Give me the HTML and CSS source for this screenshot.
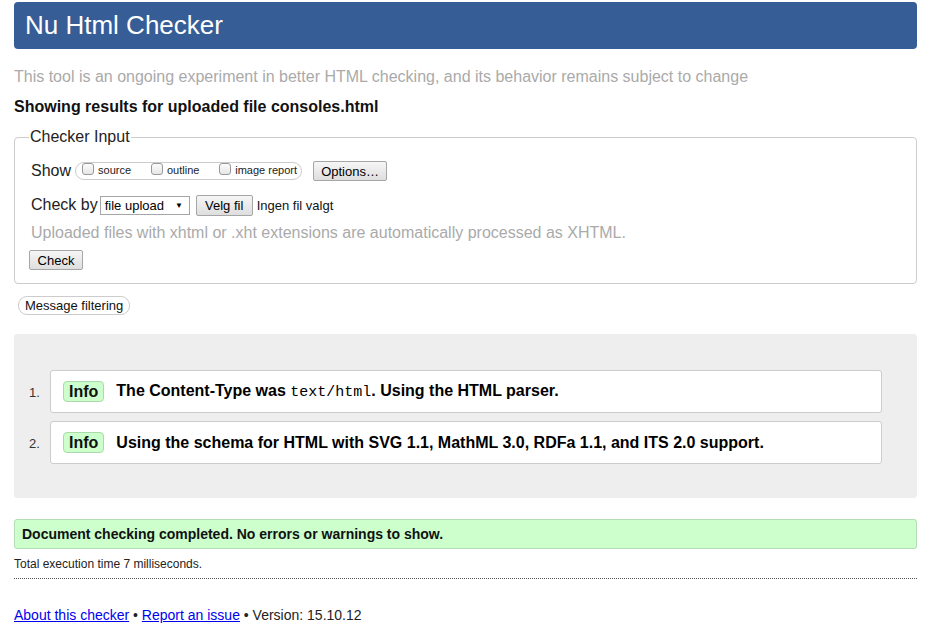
FILE: index.html
```html
<!DOCTYPE html>
<html>
<head>
<meta charset="utf-8">
<title>Nu Html Checker</title>
<link rel="stylesheet" href="styles.css">
</head>
<body>
<div class="page">
  <h1 class="banner">Nu Html Checker</h1>
  <p class="tagline">This tool is an ongoing experiment in better HTML checking, and its behavior remains subject to change</p>
  <p class="showing">Showing results for uploaded file consoles.html</p>

  <fieldset class="input">
    <legend>Checker Input</legend>
    <div class="row">
      <span class="lbl">Show</span>
      <span class="pill">
        <label class="opt"><span class="cb"></span>source</label>
        <label class="opt"><span class="cb"></span>outline</label>
        <label class="opt"><span class="cb"></span>image report</label>
      </span>
      <span class="btn btn-opt">Options…</span>
    </div>
    <div class="row row2">
      <span class="lbl">Check by</span>
      <span class="select">file upload<span class="arrow">▼</span></span>
      <span class="btn btn-file">Velg fil</span>
      <span class="nofile">Ingen fil valgt</span>
    </div>
    <p class="note">Uploaded files with xhtml or .xht extensions are automatically processed as XHTML.</p>
    <div class="check-row"><span class="btn btn-check">Check</span></div>
  </fieldset>

  <div class="filter-row"><span class="filter">Message filtering</span></div>

  <div class="results">
    <ol class="msgs">
      <li><div class="msg"><span class="info">Info</span><span class="text">The Content-Type was <code>text/html</code>. Using the HTML parser.</span></div></li>
      <li><div class="msg"><span class="info">Info</span><span class="text">Using the schema for HTML with SVG 1.1, MathML 3.0, RDFa 1.1, and ITS 2.0 support.</span></div></li>
    </ol>
  </div>

  <div class="success">Document checking completed. No errors or warnings to show.</div>
  <p class="time">Total execution time 7 milliseconds.</p>

  <p class="footer"><a href="#">About this checker</a> • <a href="#">Report an issue</a> • Version: 15.10.12</p>
</div>
</body>
</html>
```
FILE: styles.css
```css
html, body {
  margin: 0;
  padding: 0;
  background: #fff;
}
body {
  font-family: "Liberation Sans", Arial, sans-serif;
  color: #000;
}
.page {
  width: 903px;
  margin-left: 14px;
  padding-top: 2px;
}
.banner {
  margin: 0;
  height: 47px;
  box-sizing: border-box;
  background: #365d96;
  color: #fff;
  border-radius: 4px;
  font-weight: normal;
  font-size: 26px;
  line-height: 47px;
  padding-left: 11px;
}
.tagline {
  margin: 18px 0 0;
  font-size: 16px;
  line-height: 19px;
  color: #aaa;
}
.showing {
  margin: 11px 0 0;
  font-size: 16px;
  font-weight: bold;
  line-height: 19px;
  color: #111;
}
.input {
  margin: 12px 0 0;
  padding: 13px 16px 13px 16px;
  border: 1px solid #ccc;
  border-radius: 4px;
  min-width: 0;
}
.input legend {
  font-size: 16px;
  color: #222;
  padding: 0 1px;
  margin-left: -2px;
  line-height: 18px;
}
.row {
  display: flex;
  align-items: center;
  height: 20px;
  margin-top: 2px;
}
.row2 {
  margin-top: 14px;
}
.lbl {
  font-size: 16px;
  color: #222;
  margin-right: 4px;
}
.pill {
  display: inline-flex;
  align-items: center;
  height: 18px;
  box-sizing: border-box;
  border: 1px solid #ccc;
  border-radius: 9px;
  padding: 0 4px 0 6px;
  width: 227px;
  justify-content: space-between;
}
.opt {
  display: inline-flex;
  align-items: center;
  font-size: 11px;
  color: #222;
  margin-top: -2px;
}
.cb {
  display: inline-block;
  width: 12px;
  height: 12px;
  box-sizing: border-box;
  border: 1px solid #999;
  border-radius: 3px;
  background: linear-gradient(#fcfcfc, #e6e6e6);
  margin-right: 4px;
  margin-top: -3px;
}
.btn {
  display: inline-flex;
  align-items: center;
  justify-content: center;
  box-sizing: border-box;
  height: 20px;
  border: 1px solid #a6a6a6;
  border-radius: 2px;
  background: linear-gradient(#f6f6f6, #dedede);
  font-size: 13px;
  color: #000;
  padding: 0 7px;
}
.btn-opt {
  margin-left: 11px;
  width: 74px;
}
.select {
  display: inline-flex;
  align-items: center;
  box-sizing: border-box;
  height: 19px;
  width: 90px;
  border: 1px solid #a6a6a6;
  font-size: 13px;
  padding-left: 4px;
  color: #000;
  margin-left: -2px;
}
.arrow {
  font-size: 8px;
  margin-left: 11px;
}
.btn-file {
  margin-left: 6px;
  width: 57px;
  height: 21px;
}
.nofile {
  font-size: 13px;
  margin-left: 4px;
  color: #111;
}
.note {
  margin: 8px 0 0;
  font-size: 16px;
  line-height: 19px;
  color: #aaa;
}
.check-row {
  display: flex;
  margin-top: 8px;
  margin-left: -2px;
}
.btn-check {
  width: 54px;
}
.filter-row {
  display: flex;
  margin-top: 12px;
  padding-left: 4px;
}
.filter {
  display: inline-flex;
  align-items: center;
  height: 19px;
  box-sizing: border-box;
  border: 1px solid #ccc;
  border-radius: 9px;
  padding: 0 6px;
  font-size: 13px;
  color: #111;
}
.results {
  margin-top: 19px;
  background: #eee;
  border-radius: 3px;
  padding: 36px 35px 34px 0;
}
.msgs {
  margin: 0;
  padding: 0;
  list-style: none;
  counter-reset: item;
}
.msgs li {
  display: flex;
  align-items: center;
  counter-increment: item;
}
.msgs li::before {
  content: counter(item) ".";
  width: 36px;
  flex: none;
  box-sizing: border-box;
  padding-left: 15px;
  font-size: 13px;
  color: #333;
  padding-top: 2px;
}
.msgs li + li {
  margin-top: 8px;
}
.msg {
  flex: 1;
  display: flex;
  align-items: center;
  height: 43px;
  box-sizing: border-box;
  background: #fff;
  border: 1px solid #ccc;
  border-radius: 3px;
  padding-left: 12px;
  font-size: 16px;
  font-weight: bold;
  color: #000;
}
.info {
  display: inline-flex;
  align-items: center;
  height: 21px;
  box-sizing: border-box;
  background: #ccffcc;
  border: 1px solid #aadaaa;
  border-radius: 4px;
  padding: 0 5px;
  margin-right: 12px;
  color: #111;
}
.msg code {
  font-family: "Liberation Mono", monospace;
  font-weight: normal;
  font-size: 15px;
}
.success {
  margin-top: 21px;
  height: 30px;
  box-sizing: border-box;
  background: #ccffcc;
  border: 1px solid #b3ddb3;
  border-radius: 3px;
  font-size: 14px;
  font-weight: bold;
  line-height: 28px;
  padding-left: 7px;
  color: #111;
}
.time {
  margin: 8px 0 0;
  padding-bottom: 7px;
  font-size: 12px;
  line-height: 14px;
  color: #222;
  border-bottom: 1px dotted #555;
}
.footer {
  margin: 28px 0 0;
  font-size: 14px;
  line-height: 16px;
  color: #222;
}
.footer a {
  color: #00e;
}
```
